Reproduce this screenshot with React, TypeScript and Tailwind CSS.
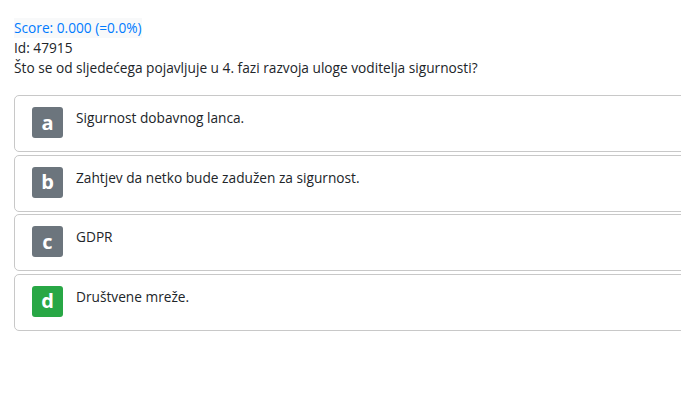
const answers = [
  { letter: 'a', text: 'Sigurnost dobavnog lanca.', correct: false },
  { letter: 'b', text: 'Zahtjev da netko bude zadužen za sigurnost.', correct: false },
  { letter: 'c', text: 'GDPR', correct: false },
  { letter: 'd', text: 'Društvene mreže.', correct: true },
];

const App = () => {
  return (
    <div
      className="w-[681px] h-[409px] overflow-hidden bg-white text-[13.7px] leading-[20px] text-[#212529]"
      style={{ fontFamily: '"Open Sans", "Noto Sans", sans-serif' }}
    >
      <div className="pt-[18px] pl-[14px]">
        <div className="inline-block bg-[#f8f9fa] text-[#007bff]">Score: 0.000 (=0.0%)</div>
        <div>Id: 47915</div>
        <div>Što se od sljedećega pojavljuje u 4. fazi razvoja uloge voditelja sigurnosti?</div>
      </div>

      <div className="mt-[17px] ml-[14px] w-[720px] flex flex-col gap-[2.5px]">
        {answers.map((a) => (
          <div
            key={a.letter}
            className="h-[57px] border border-[#c8c8c8] rounded-[5px] flex items-start pt-[11px] pl-[17px]"
          >
            <div
              className={`w-[31px] h-[31px] rounded-[3px] flex items-center justify-center text-white font-bold text-[20px] ${
                a.correct ? 'bg-[#28a745]' : 'bg-[#6c757d]'
              }`}
            >
              {a.letter}
            </div>
            <div className="ml-[13px] mt-[1px]">{a.text}</div>
          </div>
        ))}
      </div>
    </div>
  );
};

export default App;
